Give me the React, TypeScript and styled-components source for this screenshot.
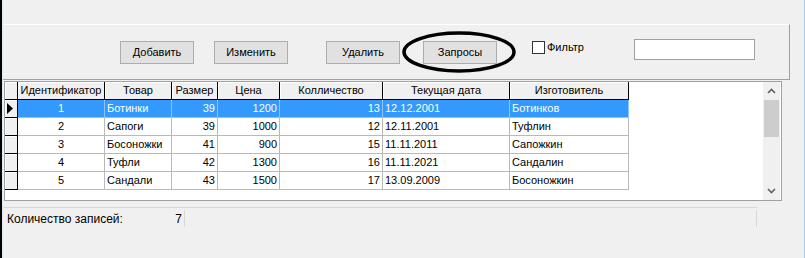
import React from 'react';
import styled, { createGlobalStyle } from 'styled-components';

const GlobalStyle = createGlobalStyle`
  html, body {
    margin: 0;
    padding: 0;
    background: #f0f0f0;
  }
  body {
    width: 805px;
    height: 258px;
    overflow: hidden;
    font-family: "Liberation Sans", Arial, sans-serif;
    font-size: 11px;
    color: #000;
  }
`;

type Align = 'left' | 'center' | 'right';

interface Column {
  title: string;
  key: string;
  width: number;
  align: Align;
}

const columns: Column[] = [
  { title: 'Идентификатор', key: 'id', width: 87, align: 'center' },
  { title: 'Товар', key: 'name', width: 67, align: 'left' },
  { title: 'Размер', key: 'size', width: 46, align: 'right' },
  { title: 'Цена', key: 'price', width: 62, align: 'right' },
  { title: 'Колличество', key: 'qty', width: 103, align: 'right' },
  { title: 'Текущая дата', key: 'date', width: 127, align: 'left' },
  { title: 'Изготовитель', key: 'maker', width: 119, align: 'left' },
];

const rows: Record<string, string>[] = [
  { id: '1', name: 'Ботинки', size: '39', price: '1200', qty: '13', date: '12.12.2001', maker: 'Ботинков' },
  { id: '2', name: 'Сапоги', size: '39', price: '1000', qty: '12', date: '12.11.2001', maker: 'Туфлин' },
  { id: '3', name: 'Босоножки', size: '41', price: '900', qty: '15', date: '11.11.2011', maker: 'Сапожкин' },
  { id: '4', name: 'Туфли', size: '42', price: '1300', qty: '16', date: '11.11.2021', maker: 'Сандалин' },
  { id: '5', name: 'Сандали', size: '43', price: '1500', qty: '17', date: '13.09.2009', maker: 'Босоножкин' },
];

// окно
const Window = styled.div`
  display: flex;
  width: 805px;
  height: 258px;
  box-sizing: border-box;
  border-left: 2px solid #000;
  border-right: 1px solid #aac8ec;
`;

const Client = styled.div`
  flex: 1;
  display: flex;
  flex-direction: column;
  border-left: 1px solid #dde8f6;
`;

const TopSpace = styled.div`
  height: 24px;
`;

// панель с кнопками
const ToolPanel = styled.div`
  display: flex;
  align-items: flex-start;
  box-sizing: border-box;
  width: 787px;
  height: 56px;
  padding: 16px 0 0 117px;
  border-top: 1px solid #fff;
  border-right: 1px solid #a0a0a0;
  border-bottom: 1px solid #a0a0a0;
`;

const Button = styled.button<{ $gap: number }>`
  box-sizing: border-box;
  width: 74px;
  height: 23px;
  margin-left: ${p => p.$gap}px;
  padding: 0 0 1px;
  background: #e1e1e1;
  border: 1px solid #adadad;
  font-family: "Liberation Sans", Arial, sans-serif;
  font-size: 11px;
  color: #000;
`;

const Marked = styled.div<{ $gap: number }>`
  position: relative;
  margin-left: ${p => p.$gap}px;

  & > button {
    margin-left: 0;
  }
`;

const Ring = styled.svg`
  position: absolute;
  left: -21px;
  top: -10px;
  width: 115px;
  height: 42px;
  pointer-events: none;
`;

const CheckLabel = styled.label`
  display: flex;
  align-items: center;
  gap: 2px;
  margin: -2px 0 0 35px;
  height: 16px;
`;

const Box = styled.span`
  box-sizing: border-box;
  width: 13px;
  height: 13px;
  background: #fff;
  border: 1px solid #333;
`;

const FilterInput = styled.div`
  box-sizing: border-box;
  width: 121px;
  height: 21px;
  margin: -2px 0 0 50px;
  background: #fff;
  border: 1px solid #a0a0a0;
`;

// таблица
const GridFrame = styled.div`
  display: flex;
  box-sizing: border-box;
  width: 778px;
  height: 120px;
  margin: 1px 0 0 1px;
  background: #fff;
  border: 1px solid #a0a0a0;
`;

const GridBody = styled.div`
  flex: 1;
  display: flex;
  flex-direction: column;
`;

const Row = styled.div`
  display: flex;
  height: 18px;
`;

const Indicator = styled.div`
  box-sizing: border-box;
  width: 13px;
  height: 18px;
  display: flex;
  align-items: center;
  padding-left: 2px;
  background: #f0f0f0;
  border-right: 1px solid #000;
  border-bottom: 1px solid #000;
  box-shadow: inset 1px 1px 0 #fff;
`;

const HeadCell = styled.div<{ $w: number }>`
  box-sizing: border-box;
  width: ${p => p.$w}px;
  line-height: 17px;
  text-align: center;
  white-space: nowrap;
  overflow: hidden;
  background: #f0f0f0;
  border-right: 1px solid #000;
  border-bottom: 1px solid #000;
  box-shadow: inset 1px 1px 0 #fff;
`;

const Cell = styled.div<{ $w: number; $align: Align; $sel: boolean }>`
  box-sizing: border-box;
  width: ${p => p.$w}px;
  padding: 0 2px;
  line-height: 17px;
  text-align: ${p => p.$align};
  white-space: nowrap;
  overflow: hidden;
  background: ${p => (p.$sel ? '#3399ff' : '#fff')};
  color: ${p => (p.$sel ? '#fff' : '#000')};
  border-right: 1px solid ${p => (p.$sel ? '#8cc4ff' : '#b9b9b9')};
  border-bottom: 1px solid ${p => (p.$sel ? '#8cc4ff' : '#b9b9b9')};
`;

const VScroll = styled.div`
  display: flex;
  flex-direction: column;
  width: 17px;
  margin-right: 1px;
  background: #f0f0f0;
`;

const Arrow = styled.div`
  height: 18px;
  display: flex;
  align-items: center;
  justify-content: center;
`;

const Thumb = styled.div`
  height: 37px;
  margin: 0 1px;
  background: #cdcdcd;
`;

const Track = styled.div`
  flex: 1;
`;

// строка состояния
const StatusBar = styled.div`
  display: flex;
  box-sizing: border-box;
  width: 754px;
  margin-top: 6px;
  padding-top: 1px;
  border-top: 1px solid #d7d7d7;
`;

const StatusPanel = styled.div<{ $w?: number }>`
  box-sizing: border-box;
  ${p => (p.$w ? `width: ${p.$w}px;` : 'flex: 1;')}
  height: 17px;
  margin-top: 1px;
  display: flex;
  align-items: center;
  justify-content: space-between;
  padding: 0 2px 0 4px;
  font-size: 12px;
  border-right: 1px solid #d7d7d7;
`;

const Chevron = ({ up }: { up: boolean }) => (
  <svg width="9" height="6" viewBox="0 0 9 6">
    <polyline
      points={up ? '1,5 4.5,1.5 8,5' : '1,1 4.5,4.5 8,1'}
      fill="none"
      stroke="#606060"
      strokeWidth="1.6"
    />
  </svg>
);

const App = () => {
  return (
    <>
      <GlobalStyle />
      <Window>
        <Client>
          <TopSpace />
          <ToolPanel>
            <Button $gap={0}>Добавить</Button>
            <Button $gap={20}>Изменить</Button>
            <Button $gap={38}>Удалить</Button>
            <Marked $gap={23}>
              <Button $gap={0}>Запросы</Button>
              <Ring viewBox="0 0 115 42">
                <ellipse cx="57" cy="21" rx="55" ry="19" fill="none" stroke="#000" strokeWidth="3.5" />
              </Ring>
            </Marked>
            <CheckLabel>
              <Box />
              Фильтр
            </CheckLabel>
            <FilterInput />
          </ToolPanel>

          <GridFrame>
            <GridBody>
              <Row>
                <Indicator />
                {columns.map(c => (
                  <HeadCell key={c.key} $w={c.width}>{c.title}</HeadCell>
                ))}
              </Row>
              {rows.map((r, i) => (
                <Row key={r.id}>
                  <Indicator>
                    {i === 0 && (
                      <svg width="7" height="11" viewBox="0 0 7 11">
                        <polygon points="0,0 6,5.5 0,11" fill="#000" />
                      </svg>
                    )}
                  </Indicator>
                  {columns.map(c => (
                    <Cell key={c.key} $w={c.width} $align={c.align} $sel={i === 0}>
                      {r[c.key]}
                    </Cell>
                  ))}
                </Row>
              ))}
            </GridBody>
            <VScroll>
              <Arrow><Chevron up /></Arrow>
              <Thumb />
              <Track />
              <Arrow><Chevron up={false} /></Arrow>
            </VScroll>
          </GridFrame>

          <StatusBar>
            <StatusPanel $w={182}>
              <span>Количество записей:</span>
              <span>7</span>
            </StatusPanel>
            <StatusPanel />
          </StatusBar>
        </Client>
      </Window>
    </>
  );
};

export default App;
